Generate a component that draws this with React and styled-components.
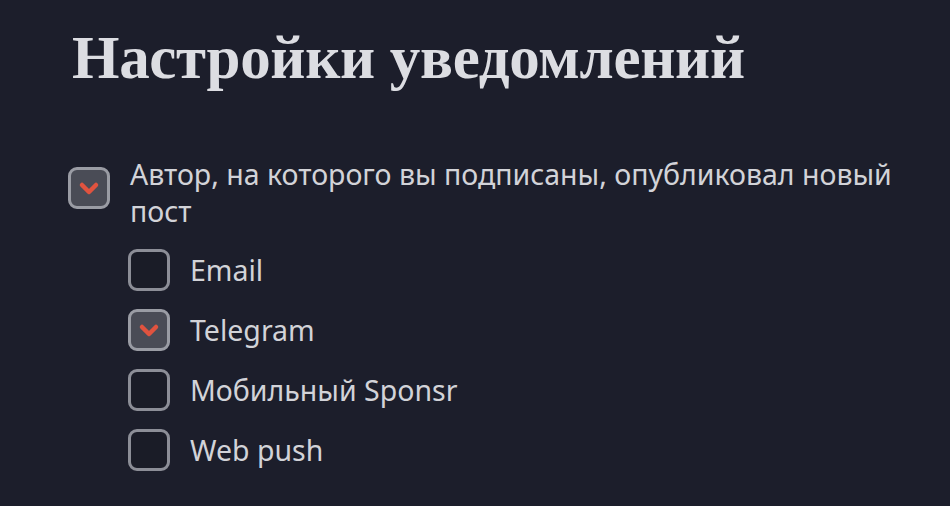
import React, { useState } from "react";
import styled, { createGlobalStyle } from "styled-components";

const Global = createGlobalStyle`
  html, body {
    margin: 0;
    padding: 0;
    background: #1c1e2b;
  }
  body {
    font-family: "Noto Sans", "Open Sans", sans-serif;
    color: #d4d5da;
  }
`;

const Page = styled.div`
  padding: 24px 30px 0 68px;
  min-height: 506px;
  box-sizing: border-box;
`;

const Title = styled.h1`
  margin: 0 0 0 4px;
  font-family: "Liberation Serif", "DejaVu Serif", serif;
  font-weight: 700;
  font-size: 61px;
  line-height: 68px;
  letter-spacing: -0.3px;
  color: #dcdde2;
`;

const Group = styled.div`
  margin-top: 64px;
  display: flex;
  flex-direction: column;
`;

const Row = styled.label`
  display: flex;
  align-items: ${(p) => (p.$top ? "flex-start" : "center")};
  gap: 20px;
  cursor: pointer;
  padding-left: ${(p) => (p.$nested ? "60px" : "0")};
  height: ${(p) => (p.$nested ? "60px" : "auto")};
  margin-bottom: ${(p) => (p.$top ? "10px" : "0")};
`;

const Box = styled.span`
  flex: none;
  width: 42px;
  height: 42px;
  box-sizing: border-box;
  border: 3px solid ${(p) => (p.$on ? "#9a9ca4" : "#8c8e97")};
  border-radius: 9px;
  background: ${(p) => (p.$on ? "#4a4c56" : "#1a1c27")};
  display: flex;
  align-items: center;
  justify-content: center;
  margin-top: ${(p) => (p.$top ? "11px" : "0")};
`;

const Label = styled.span`
  font-size: 28.5px;
  line-height: 37px;
  color: #d2d3d8;
  max-width: 790px;
`;

const Check = () => (
  <svg width="24" height="24" viewBox="0 0 24 24" fill="none">
    <path
      d="M5 9l7 7 7-7"
      stroke="#e0533f"
      strokeWidth="4.5"
      strokeLinecap="round"
      strokeLinejoin="round"
    />
  </svg>
);

const channels = [
  { id: "email", label: "Email", on: false },
  { id: "tg", label: "Telegram", on: true },
  { id: "mobile", label: "Мобильный Sponsr", on: false },
  { id: "push", label: "Web push", on: false },
];

export default function App() {
  const [state, setState] = useState(
    Object.fromEntries(channels.map((c) => [c.id, c.on]))
  );
  const [main, setMain] = useState(true);

  return (
    <Page>
      <Global />
      <Title>Настройки уведомлений</Title>
      <Group>
        <Row $top onClick={() => setMain(!main)}>
          <Box $top $on={main}>{main && <Check />}</Box>
          <Label>Автор, на которого вы подписаны, опубликовал новый пост</Label>
        </Row>
        {channels.map((c) => (
          <Row
            key={c.id}
            $nested
            onClick={() => setState({ ...state, [c.id]: !state[c.id] })}
          >
            <Box $on={state[c.id]}>{state[c.id] && <Check />}</Box>
            <Label>{c.label}</Label>
          </Row>
        ))}
      </Group>
    </Page>
  );
}
